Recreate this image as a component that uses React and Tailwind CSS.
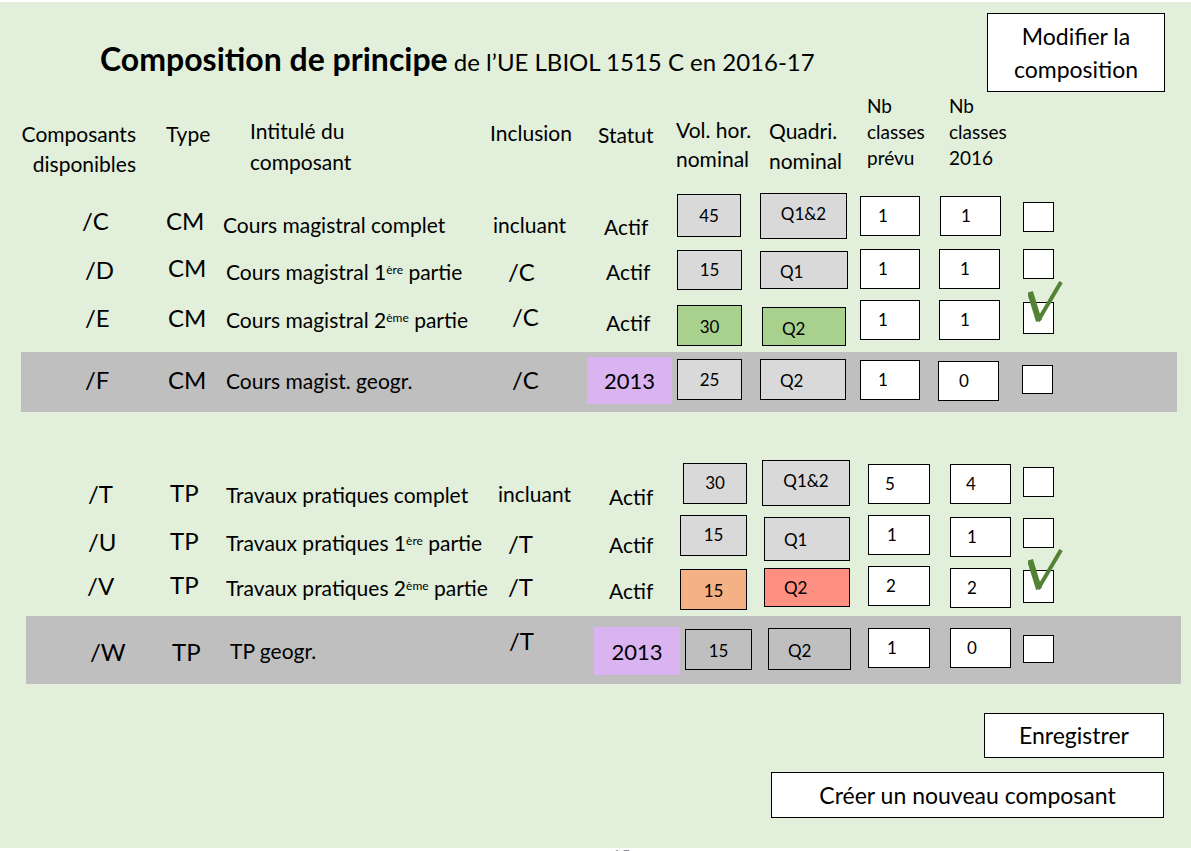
import React from 'react';

const FONT = "font-['Lato','Liberation_Sans',sans-serif]";

// column widths shared by header and rows (x: 0,166,222,485,585,675,758,858,938,1018)
const W = ['w-[166px]', 'w-[56px]', 'w-[263px]', 'w-[100px]', 'w-[90px]', 'w-[83px]', 'w-[100px]', 'w-[80px]', 'w-[80px]', 'w-[60px]'];

const Row = ({ h, band, first, cells }) => (
  <div className={"flex shrink-0 items-start " + h + (band ? " " + band : "")}>
    {cells.map((c, i) => (
      <div key={i} className={"shrink-0 whitespace-nowrap " + (i === 0 && first ? first : W[i]) + " " + c[0]}>
        {c[1]}
      </div>
    ))}
  </div>
);

const Big = ({ children }) => <div className="text-[24px] leading-[30px]">{children}</div>;
const Txt = ({ children }) => <div className="text-[21px] leading-[26px]">{children}</div>;

const Box = ({ c, children }) => (
  <div className={"border border-black flex items-center text-[17px] leading-[20px] " + c}>{children}</div>
);

const Check = ({ c, mark }) => (
  <div className={"relative border border-black bg-white " + c}>
    {mark && (
      <svg className="absolute left-[4px] top-[-24px]" width="40" height="46" viewBox="0 0 40 46">
        <line x1="2" y1="13" x2="11" y2="42" stroke="#548235" strokeWidth="6" />
        <line x1="10" y1="42" x2="33" y2="3" stroke="#548235" strokeWidth="4" />
      </svg>
    )}
  </div>
);

const Sup = ({ children }) => <sup className="text-[12px]">{children}</sup>;

const Year = ({ c }) => (
  <div className={"bg-[#dab4f1] flex items-center justify-center text-[22px] " + c}>2013</div>
);

export default function App() {
  return (
    <div className={"w-[1191px] h-[851px] overflow-hidden bg-white text-black " + FONT}>
      <div className="mt-[2px] h-[846px] bg-[#e2efda] flex flex-col">
        {/* title + top button */}
        <div className="flex h-[91px] shrink-0">
          <div className="pl-[100px] pt-[38px] leading-[38px] whitespace-nowrap">
            <span className="text-[32px] font-bold">Composition de principe</span>
            <span className="text-[24px]"> de l’UE LBIOL 1515 C en 2016-17</span>
          </div>
          <div className="ml-auto mr-[26px] mt-[11px] w-[178px] h-[79px] bg-white border border-black flex flex-col items-center justify-center text-[23px] leading-[33px]">
            <span>Modifier la</span>
            <span>composition</span>
          </div>
        </div>

        {/* column headers */}
        <div className="flex h-[97px] shrink-0 items-start text-[21px] leading-[30px] whitespace-nowrap">
          <div className="w-[166px] pr-[30px] pt-[26px] text-right">Composants<br />disponibles</div>
          <div className="w-[56px] pt-[26px]">Type</div>
          <div className="w-[263px] pl-[28px] pt-[22px] leading-[31px]">Intitulé du<br />composant</div>
          <div className="w-[100px] pl-[5px] pt-[25px]">Inclusion</div>
          <div className="w-[90px] pl-[13px] pt-[27px]">Statut</div>
          <div className="w-[83px] pl-[1px] pt-[22px] leading-[29px]">Vol. hor.<br />nominal</div>
          <div className="w-[100px] pl-[11px] pt-[23px]">Quadri.<br />nominal</div>
          <div className="w-[80px] pl-[9px] text-[19px] leading-[26px]">Nb<br />classes<br />prévu</div>
          <div className="w-[80px] pl-[11px] text-[19px] leading-[26px]">Nb<br />classes<br />2016</div>
        </div>

        {/* CM group */}
        <Row h="h-[56px]" cells={[
          ['pl-[82px] pt-[16px]', <Big>/C</Big>],
          ['pt-[16px]', <Big>CM</Big>],
          ['pl-[1px] pt-[22px]', <Txt>Cours magistral complet</Txt>],
          ['pl-[8px] pt-[22px]', <Txt>incluant</Txt>],
          ['pl-[19px] pt-[24px]', <Txt>Actif</Txt>],
          ['pl-[2px] pt-[4px]', <Box c="w-[64px] h-[43px] bg-[#d9d9d9] justify-center">45</Box>],
          ['pl-[2px] pt-[3px]', <Box c="w-[87px] h-[46px] bg-[#d9d9d9] justify-center pb-[5px]">Q1&amp;2</Box>],
          ['pl-[2px] pt-[6px]', <Box c="w-[60px] h-[40px] bg-white pl-[17px]">1</Box>],
          ['pl-[2px] pt-[6px]', <Box c="w-[61px] h-[40px] bg-white pl-[20px]">1</Box>],
          ['pl-[5px] pt-[12px]', <Check c="w-[31px] h-[30px]" />],
        ]} />
        <Row h="h-[52px]" cells={[
          ['pl-[85px] pt-[9px]', <Big>/D</Big>],
          ['pl-[2px] pt-[7px]', <Big>CM</Big>],
          ['pl-[4px] pt-[13px]', <Txt>Cours magistral 1<Sup>ère</Sup> partie</Txt>],
          ['pl-[23px] pt-[11px]', <Big>/C</Big>],
          ['pl-[21px] pt-[13px]', <Txt>Actif</Txt>],
          ['pl-[2px] pt-[4px]', <Box c="w-[65px] h-[40px] bg-[#d9d9d9] justify-center">15</Box>],
          ['pl-[2px] pt-[5px]', <Box c="w-[88px] h-[38px] bg-[#d9d9d9] pl-[19px] pt-[4px]">Q1</Box>],
          ['pl-[2px] pt-[3px]', <Box c="w-[60px] h-[40px] bg-white pl-[17px]">1</Box>],
          ['pl-[1px] pt-[3px]', <Box c="w-[61px] h-[40px] bg-white pl-[20px]">1</Box>],
          ['pl-[5px] pt-[3px]', <Check c="w-[31px] h-[30px]" />],
        ]} />
        <Row h="h-[54px]" cells={[
          ['pl-[85px] pt-[5px]', <Big>/E</Big>],
          ['pl-[2px] pt-[5px]', <Big>CM</Big>],
          ['pl-[4px] pt-[9px]', <Txt>Cours magistral 2<Sup>ème</Sup> partie</Txt>],
          ['pl-[27px] pt-[4px]', <Big>/C</Big>],
          ['pl-[21px] pt-[12px]', <Txt>Actif</Txt>],
          ['pl-[2px] pt-[7px]', <Box c="w-[65px] h-[41px] bg-[#a9d18e] justify-center pt-[3px]">30</Box>],
          ['pl-[4px] pt-[9px]', <Box c="w-[84px] h-[39px] bg-[#a9d18e] pl-[19px] pt-[4px]">Q2</Box>],
          ['pl-[2px] pt-[2px]', <Box c="w-[60px] h-[40px] bg-white pl-[17px]">1</Box>],
          ['pl-[1px] pt-[2px]', <Box c="w-[61px] h-[40px] bg-white pl-[20px]">1</Box>],
          ['pl-[5px] pt-[4px]', <Check c="w-[31px] h-[32px]" mark />],
        ]} />
        <Row h="h-[60px]" band="ml-[21px] w-[1156px] bg-[#bfbfbf]" first="w-[145px]" cells={[
          ['pl-[64px] pt-[13px]', <Big>/F</Big>],
          ['pl-[2px] pt-[13px]', <Big>CM</Big>],
          ['pl-[4px] pt-[16px]', <Txt>Cours magist. geogr.</Txt>],
          ['pl-[27px] pt-[13px]', <Big>/C</Big>],
          ['pl-[2px] pt-[5px]', <Year c="w-[85px] h-[47px]" />],
          ['pl-[2px] pt-[7px]', <Box c="w-[65px] h-[41px] bg-[#d9d9d9] justify-center">25</Box>],
          ['pl-[2px] pt-[7px]', <Box c="w-[86px] h-[41px] bg-[#d9d9d9] pl-[19px] pt-[2px]">Q2</Box>],
          ['pl-[2px] pt-[8px]', <Box c="w-[60px] h-[40px] bg-white pl-[17px]">1</Box>],
          ['pt-[9px]', <Box c="w-[61px] h-[40px] bg-white pl-[20px]">0</Box>],
          ['pl-[4px] pt-[13px]', <Check c="w-[31px] h-[29px]" />],
        ]} />

        <div className="h-[38px] shrink-0" />

        {/* TP group */}
        <Row h="h-[62px]" cells={[
          ['pl-[88px] pt-[29px]', <Big>/T</Big>],
          ['pl-[4px] pt-[28px]', <Big>TP</Big>],
          ['pl-[4px] pt-[32px]', <Txt>Travaux pratiques complet</Txt>],
          ['pl-[13px] pt-[31px]', <Txt>incluant</Txt>],
          ['pl-[24px] pt-[34px]', <Txt>Actif</Txt>],
          ['pl-[8px] pt-[13px]', <Box c="w-[64px] h-[41px] bg-[#d9d9d9] justify-center pb-[2px]">30</Box>],
          ['pl-[4px] pt-[10px]', <Box c="w-[88px] h-[46px] bg-[#d9d9d9] justify-center pb-[5px]">Q1&amp;2</Box>],
          ['pl-[10px] pt-[14px]', <Box c="w-[62px] h-[40px] bg-white pl-[16px]">5</Box>],
          ['pl-[12px] pt-[14px]', <Box c="w-[61px] h-[40px] bg-white pl-[15px]">4</Box>],
          ['pl-[5px] pt-[17px]', <Check c="w-[31px] h-[30px]" />],
        ]} />
        <Row h="h-[50px]" cells={[
          ['pl-[88px] pt-[15px]', <Big>/U</Big>],
          ['pl-[4px] pt-[14px]', <Big>TP</Big>],
          ['pl-[4px] pt-[18px]', <Txt>Travaux pratiques 1<Sup>ère</Sup> partie</Txt>],
          ['pl-[23px] pt-[17px]', <Big>/T</Big>],
          ['pl-[24px] pt-[20px]', <Txt>Actif</Txt>],
          ['pl-[5px] pt-[3px]', <Box c="w-[67px] h-[41px] bg-[#d9d9d9] justify-center pb-[2px]">15</Box>],
          ['pl-[6px] pt-[5px]', <Box c="w-[86px] h-[44px] bg-[#d9d9d9] pl-[19px] pt-[2px]">Q1</Box>],
          ['pl-[10px] pt-[3px]', <Box c="w-[62px] h-[40px] bg-white pl-[18px]">1</Box>],
          ['pl-[12px] pt-[5px]', <Box c="w-[61px] h-[40px] bg-white pl-[16px]">1</Box>],
          ['pl-[5px] pt-[6px]', <Check c="w-[31px] h-[30px]" />],
        ]} />
        <Row h="h-[54px]" cells={[
          ['pl-[87px] pt-[9px]', <Big>/V</Big>],
          ['pl-[4px] pt-[8px]', <Big>TP</Big>],
          ['pl-[4px] pt-[13px]', <div className="w-[263px] overflow-hidden"><Txt>Travaux pratiques 2<Sup>ème</Sup> partie</Txt></div>],
          ['pl-[23px] pt-[10px]', <Big>/T</Big>],
          ['pl-[24px] pt-[16px]', <Txt>Actif</Txt>],
          ['pl-[5px] pt-[7px]', <Box c="w-[67px] h-[41px] bg-[#f4b183] justify-center pt-[3px]">15</Box>],
          ['pl-[6px] pt-[6px]', <Box c="w-[86px] h-[39px] bg-[#ff8f80] pl-[19px]">Q2</Box>],
          ['pl-[10px] pt-[4px]', <Box c="w-[62px] h-[40px] bg-white pl-[17px]">2</Box>],
          ['pl-[12px] pt-[6px]', <Box c="w-[61px] h-[40px] bg-white pl-[16px]">2</Box>],
          ['pl-[5px] pt-[8px]', <Check c="w-[31px] h-[33px]" mark />],
        ]} />
        <Row h="h-[68px]" band="ml-[26px] w-[1155px] bg-[#bfbfbf]" first="w-[140px]" cells={[
          ['pl-[64px] pt-[21px]', <Big>/W</Big>],
          ['pl-[6px] pt-[21px]', <Big>TP</Big>],
          ['pl-[8px] pt-[22px]', <Txt>TP geogr.</Txt>],
          ['pl-[24px] pt-[10px]', <Big>/T</Big>],
          ['pl-[9px] pt-[11px]', <Year c="w-[86px] h-[48px]" />],
          ['pl-[10px] pt-[13px]', <Box c="w-[67px] h-[41px] justify-center pt-[2px]">15</Box>],
          ['pl-[10px] pt-[12px]', <Box c="w-[83px] h-[42px] pl-[19px] pt-[3px]">Q2</Box>],
          ['pl-[10px] pt-[12px]', <Box c="w-[62px] h-[40px] bg-white pl-[18px]">1</Box>],
          ['pl-[12px] pt-[12px]', <Box c="w-[61px] h-[40px] bg-white pl-[16px]">0</Box>],
          ['pl-[5px] pt-[19px]', <Check c="w-[31px] h-[28px]" />],
        ]} />

        {/* actions */}
        <div className="flex flex-col items-end pr-[27px] pt-[29px] gap-[14px] text-[23px]">
          <div className="w-[180px] h-[45px] bg-white border border-black flex items-center justify-center">Enregistrer</div>
          <div className="w-[393px] h-[46px] bg-white border border-black flex items-center justify-center">Créer un nouveau composant</div>
        </div>
      </div>
      <div className="pl-[612px] text-[16px] leading-[14px] text-[#8c8c8c]">15</div>
    </div>
  );
}
